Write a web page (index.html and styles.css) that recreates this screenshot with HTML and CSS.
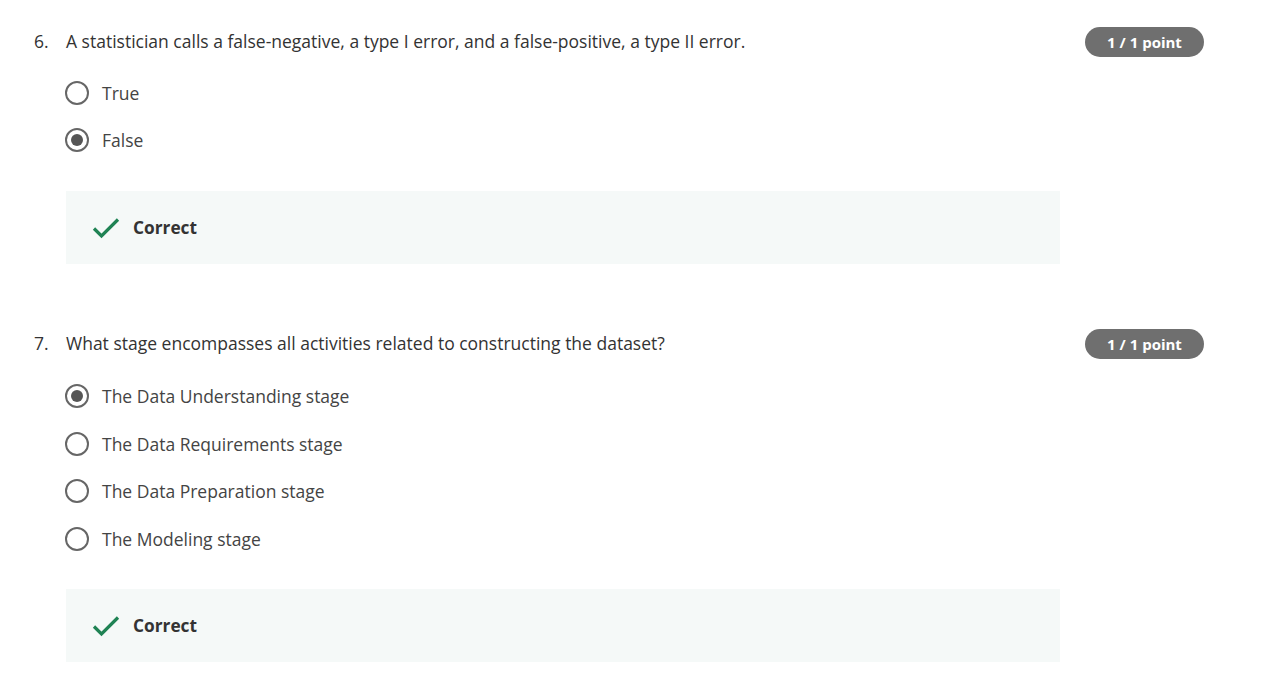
FILE: index.html
```html
<!DOCTYPE html>
<html lang="en">
<head>
<meta charset="utf-8">
<title>Quiz</title>
<link rel="stylesheet" href="styles.css">
</head>
<body>
<div class="page">
  <section class="question q6">
    <div class="num">6.</div>
    <div class="content">
      <div class="head">
        <div class="prompt">A statistician calls a false-negative, a type I error, and a false-positive, a type II error.</div>
        <div class="badge">1 / 1 point</div>
      </div>
      <ul class="options">
        <li class="option"><span class="radio"></span><span class="label">True</span></li>
        <li class="option"><span class="radio checked"></span><span class="label">False</span></li>
      </ul>
      <div class="feedback">
        <svg class="check" width="28" height="22" viewBox="0 0 28 22"><path d="M2 11.5 L9.5 19 L26 2.5" fill="none" stroke="#1f8354" stroke-width="3.2"/></svg>
        <span class="fb-text">Correct</span>
      </div>
    </div>
  </section>
  <section class="question q7">
    <div class="num">7.</div>
    <div class="content">
      <div class="head">
        <div class="prompt">What stage encompasses all activities related to constructing the dataset?</div>
        <div class="badge">1 / 1 point</div>
      </div>
      <ul class="options">
        <li class="option"><span class="radio checked"></span><span class="label">The Data Understanding stage</span></li>
        <li class="option"><span class="radio"></span><span class="label">The Data Requirements stage</span></li>
        <li class="option"><span class="radio"></span><span class="label">The Data Preparation stage</span></li>
        <li class="option"><span class="radio"></span><span class="label">The Modeling stage</span></li>
      </ul>
      <div class="feedback">
        <svg class="check" width="28" height="22" viewBox="0 0 28 22"><path d="M2 11.5 L9.5 19 L26 2.5" fill="none" stroke="#1f8354" stroke-width="3.2"/></svg>
        <span class="fb-text">Correct</span>
      </div>
    </div>
  </section>
</div>
</body>
</html>
```
FILE: styles.css
```css
html, body {
  margin: 0;
  padding: 0;
  background: #ffffff;
}
body {
  font-family: "Open Sans", "DejaVu Sans", sans-serif;
  color: #333333;
}
.page {
  padding: 29px 0 0 34px;
  width: 1170px;
}
.question {
  display: flex;
}
.q7 {
  margin-top: 67px;
}
.num {
  width: 32px;
  flex: none;
  font-size: 17.5px;
  line-height: 24px;
  color: #333333;
}
.content {
  flex: 1;
}
.head {
  display: flex;
  align-items: flex-start;
  justify-content: space-between;
}
.prompt {
  font-size: 17.5px;
  line-height: 24px;
  color: #333333;
}
.badge {
  flex: none;
  width: 119px;
  height: 30px;
  margin: -2px 0 -4px 0;
  border-radius: 15px;
  background: #6f6f6f;
  color: #ffffff;
  font-weight: 700;
  font-size: 15px;
  line-height: 30px;
  text-align: center;
}
.options {
  list-style: none;
  margin: 28px 0 0 0;
  padding: 0;
  display: flex;
  flex-direction: column;
  gap: 23px;
}
.q7 .options {
  margin-top: 29px;
  gap: 23.5px;
}
.option {
  display: flex;
  align-items: center;
  height: 24px;
}
.radio {
  box-sizing: border-box;
  width: 24px;
  height: 24px;
  border: 2px solid #666666;
  border-radius: 50%;
  margin-left: -1px;
  display: flex;
  align-items: center;
  justify-content: center;
  flex: none;
}
.radio.checked::after {
  content: "";
  width: 12px;
  height: 12px;
  border-radius: 50%;
  background: #555555;
}
.label {
  margin-left: 13px;
  font-size: 17.5px;
  line-height: 24px;
  color: #444444;
}
.feedback {
  margin-top: 39px;
  width: 994px;
  height: 73px;
  box-sizing: border-box;
  background: #f5f9f8;
  display: flex;
  align-items: center;
  padding-left: 26px;
}
.q7 .feedback {
  margin-top: 38.5px;
}
.check {
  flex: none;
}
.fb-text {
  margin-left: 13px;
  font-weight: 700;
  font-size: 17.3px;
  color: #333333;
}
```
